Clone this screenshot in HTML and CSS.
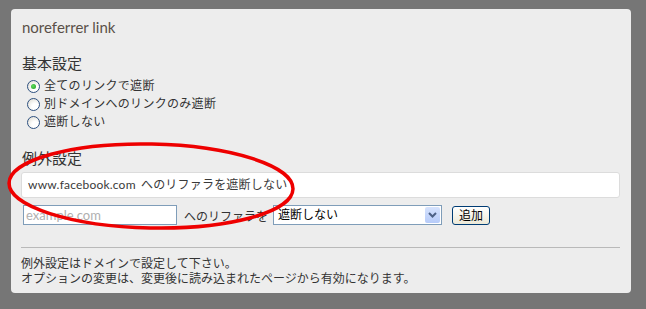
FILE: index.html
```html
<!DOCTYPE html>
<html lang="ja">

<head>
    <meta charset="UTF-8">
    <meta name="viewport" content="width=device-width, initial-scale=1.0">
    <title>noreferrer link</title>
    <link rel="stylesheet" href="styles.css">
</head>

<body>
    <div class="panel">
        <div class="title">noreferrer link</div>

        <h2 class="heading">基本設定</h2>
        <ul class="radios">
            <li><span class="radio checked"></span>全てのリンクで遮断</li>
            <li><span class="radio"></span>別ドメインへのリンクのみ遮断</li>
            <li><span class="radio"></span>遮断しない</li>
        </ul>

        <h2 class="heading second">例外設定</h2>
        <div class="rule">www.facebook.com へのリファラを遮断しない</div>

        <div class="add-row">
            <div class="text-input">example.com</div>
            <span class="label">へのリファラを</span>
            <div class="select">
                <span class="select-value">遮断しない</span>
                <span class="select-btn">
                    <svg width="9" height="6" viewBox="0 0 9 6"><path d="M1 1 L4.5 4.5 L8 1" fill="none" stroke="#4d6185" stroke-width="2"/></svg>
                </span>
            </div>
            <div class="button">追加</div>
        </div>

        <hr class="sep">

        <p class="notes">例外設定はドメインで設定して下さい。<br>オプションの変更は、変更後に読み込まれたページから有効になります。</p>
    </div>

    <!-- 赤丸の注釈 -->
    <svg class="mark" width="646" height="309" viewBox="0 0 646 309">
        <ellipse cx="151" cy="186" rx="142" ry="42" transform="rotate(1.2 151 186)" fill="none" stroke="#ee0000" stroke-width="3.5"/>
    </svg>
</body>

</html>
```

FILE: styles.css
```css
body {
    margin: 0px;
    background: #767676;
    font-family: Lato, "Noto Sans CJK JP", sans-serif;
    color: #333;
    position: relative;
    width: 646px;
    height: 309px;
    overflow: hidden;
}

.panel {
    margin: 9px 0 0 11px;
    width: 620px;
    height: 284px;
    box-sizing: border-box;
    padding: 10px 11px 0 10px;
    background: #ededed;
    border-radius: 4px;
}

.title {
    font-size: 15px;
    line-height: 16px;
    color: #5a5048;
    padding-left: 1px;
}

.heading {
    margin: 18px 0 0 1px;
    font-size: 15px;
    line-height: 20px;
    font-weight: normal;
    color: #333;
}

.heading.second {
    margin-top: 17px;
}

.radios {
    list-style: none;
    margin: 4px 0 0 0;
    padding: 0 0 0 6px;
    font-size: 12px;
    line-height: 18px;
    letter-spacing: 0.3px;
}

.radios li {
    display: flex;
    align-items: center;
    gap: 4px;
}

.radio {
    width: 11px;
    height: 11px;
    border: 1px solid #2d5080;
    border-radius: 50%;
    background: radial-gradient(circle at 65% 70%, #ffffff 30%, #e0ddd4 90%);
    display: flex;
    align-items: center;
    justify-content: center;
}

.radio.checked::after {
    content: "";
    width: 5px;
    height: 5px;
    border-radius: 50%;
    background: radial-gradient(circle at 40% 40%, #5fdc5f, #1e9a1e);
}

.rule {
    margin-top: 4px;
    height: 26px;
    box-sizing: border-box;
    border: 1px solid #dcdcdc;
    border-radius: 3px;
    background: #fff;
    padding-left: 6px;
    font-size: 12px;
    line-height: 24px;
    letter-spacing: 0.2px;
    word-spacing: 2px;
    color: #3a3a3a;
}

.add-row {
    margin-top: 7px;
    display: flex;
    align-items: center;
    height: 20px;
    font-size: 12px;
}

.text-input {
    margin-left: 2px;
    width: 154px;
    height: 20px;
    box-sizing: border-box;
    border: 1px solid #7f9db9;
    background: #fff;
    color: #b0b0b0;
    font-size: 13px;
    line-height: 18px;
    padding-left: 2px;
}

.label {
    margin-left: 7px;
    color: #333;
}

.select {
    margin-left: 5px;
    width: 169px;
    height: 20px;
    box-sizing: border-box;
    border: 1px solid #7f9db9;
    background: #fff;
    display: flex;
    justify-content: space-between;
    padding: 1px;
}

.select-value {
    padding-left: 3px;
    line-height: 16px;
    color: #000;
}

.select-btn {
    width: 15px;
    background: linear-gradient(#d6e3fd, #b6cbf9);
    border-radius: 2px;
    display: flex;
    align-items: center;
    justify-content: center;
}

.button {
    margin-left: 10px;
    width: 38px;
    height: 19px;
    box-sizing: border-box;
    border: 1px solid #003c74;
    border-radius: 3px;
    background: linear-gradient(#ffffff, #ece9d8);
    text-align: center;
    line-height: 17px;
    color: #000;
}

.sep {
    margin: 22px 0 0 0;
    border: none;
    border-top: 1px solid #b9b9b9;
}

.notes {
    margin: 8px 0 0 0;
    font-size: 12px;
    line-height: 15px;
    color: #333;
}

.mark {
    position: absolute;
    left: 0;
    top: 0;
}
```
